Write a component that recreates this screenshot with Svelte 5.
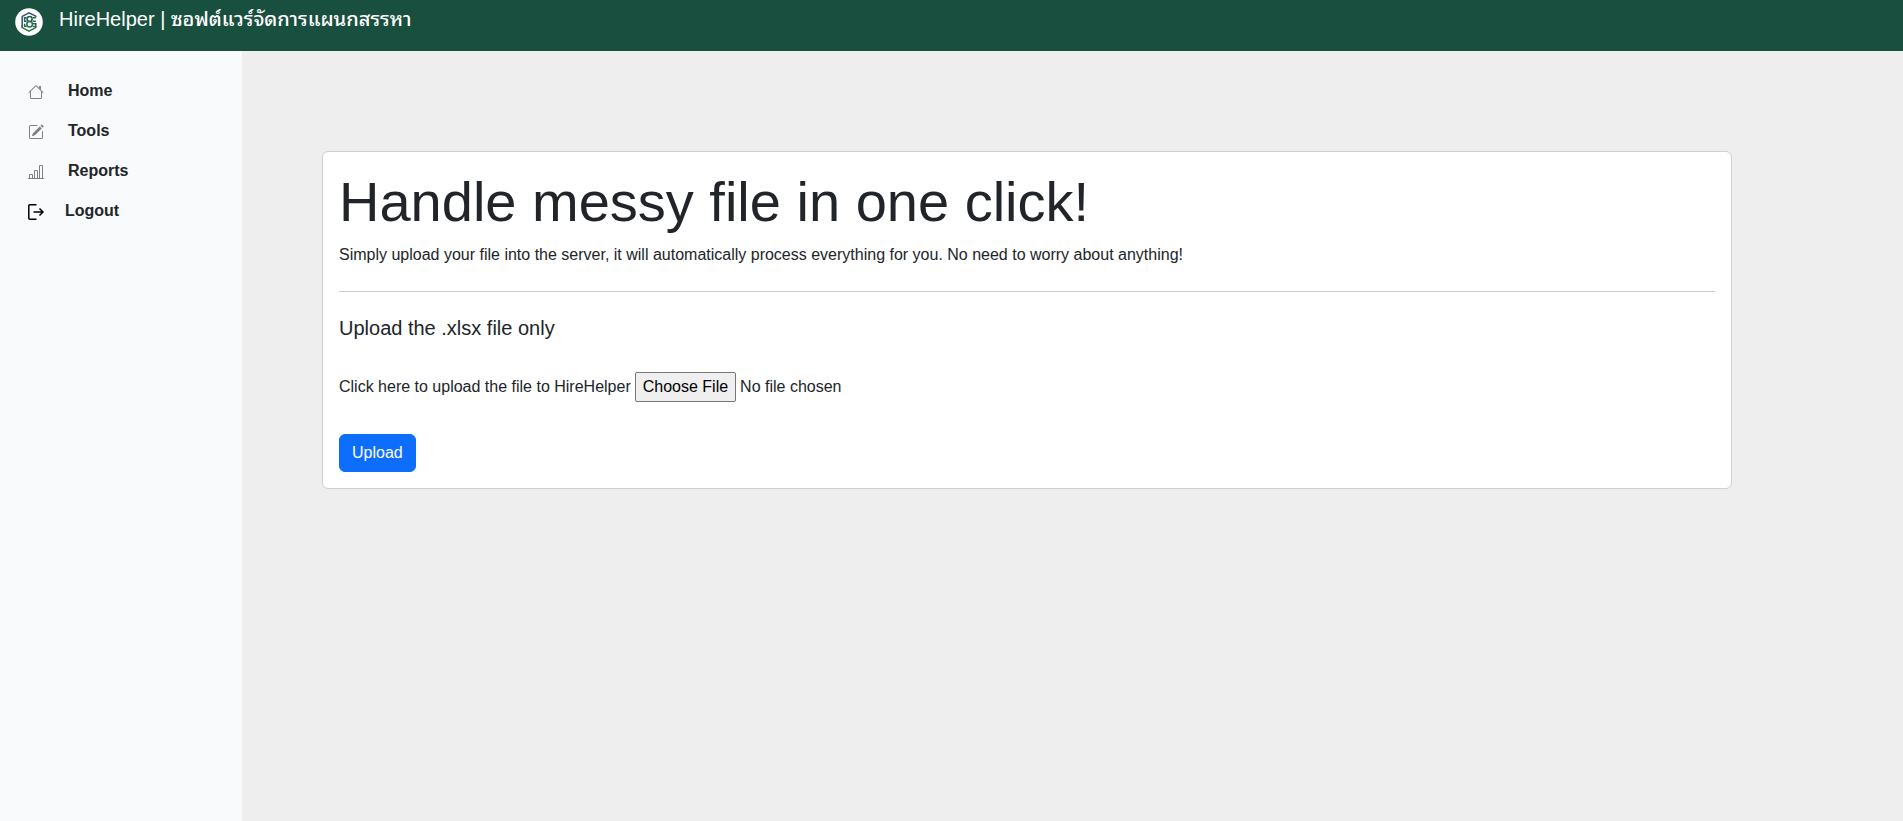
<script>
  const items = [
    {
      label: 'Home',
      paths: [
        'M2 13.5V7h1v6.5a.5.5 0 0 0 .5.5h9a.5.5 0 0 0 .5-.5V7h1v6.5a1.5 1.5 0 0 1-1.5 1.5h-9A1.5 1.5 0 0 1 2 13.5zm11-11V6l-2-2V2.5a.5.5 0 0 1 .5-.5h1a.5.5 0 0 1 .5.5z',
        'M7.293 1.5a1 1 0 0 1 1.414 0l6.647 6.646a.5.5 0 0 1-.708.708L8 2.207 1.354 8.854a.5.5 0 1 1-.708-.708L7.293 1.5z'
      ]
    },
    {
      label: 'Tools',
      paths: [
        'M15.502 1.94a.5.5 0 0 1 0 .706L14.459 3.69l-2-2L13.502.646a.5.5 0 0 1 .707 0l1.293 1.293zm-1.75 2.456-2-2L4.939 9.21a.5.5 0 0 0-.121.196l-.805 2.414a.25.25 0 0 0 .316.316l2.414-.805a.5.5 0 0 0 .196-.12l6.813-6.814z',
        'M1 13.5A1.5 1.5 0 0 0 2.5 15h11a1.5 1.5 0 0 0 1.5-1.5v-6a.5.5 0 0 0-1 0v6a.5.5 0 0 1-.5.5h-11a.5.5 0 0 1-.5-.5v-11a.5.5 0 0 1 .5-.5H9a.5.5 0 0 0 0-1H2.5A1.5 1.5 0 0 0 1 2.5v11z'
      ]
    },
    {
      label: 'Reports',
      paths: [
        'M11 2a1 1 0 0 1 1-1h2a1 1 0 0 1 1 1v12h.5a.5.5 0 0 1 0 1H.5a.5.5 0 0 1 0-1H1v-3a1 1 0 0 1 1-1h2a1 1 0 0 1 1 1v3h1V7a1 1 0 0 1 1-1h2a1 1 0 0 1 1 1v7h1V2zm1 12h2V2h-2v12zm-3 0V7H7v7h2zm-5 0v-3H2v3h2z'
      ]
    }
  ];
</script>

<div class="page">
  <header>
    <svg class="logo" viewBox="0 0 28 28" aria-hidden="true">
      <circle cx="14" cy="14" r="13.8" fill="#fff" />
      <g fill="none" stroke-width="1.5">
        <path d="M20.8 9.5V8.2L14 4.8 7.2 8.4v11.2" stroke="#35507c" />
        <path d="M7.2 17v2.6l6.8 3.6 6.8-3.6v-1" stroke="#2f7350" />
        <path d="M11.6 9.7H9.6v3.5h2M9.6 15.8v2.4h2" stroke="#25684c" />
        <path d="M17.6 9.7h3.2M17.6 13.2h3.2M18 15.8h2.8v2.6H18" stroke="#25684c" />
        <ellipse cx="14.6" cy="11" rx="2.5" ry="2.4" stroke="#2b5751" />
        <ellipse cx="14.6" cy="16.3" rx="2.8" ry="2.8" stroke="#267148" />
      </g>
    </svg>
    <span class="brand">HireHelper | <span class="thai" lang="th">ซอฟต์แวร์จัดการแผนกสรรหา</span></span>
  </header>

  <div class="body">
    <nav>
      {#each items as item}
        <a href="#{item.label.toLowerCase()}">
          <svg class="icon" viewBox="0 0 16 16" aria-hidden="true">
            {#each item.paths as d}<path {d} fill-rule="evenodd" />{/each}
          </svg>
          <span>{item.label}</span>
        </a>
      {/each}
      <a class="logout" href="#logout">
        <svg class="icon" viewBox="0 0 16 16" aria-hidden="true">
          <path d="M8.5.8H1.8a1 1 0 0 0-1 1v12.4a1 1 0 0 0 1 1h6.7M5.5 8h9.2M11.5 4.5 15 8l-3.5 3.5" />
        </svg>
        <span>Logout</span>
      </a>
    </nav>

    <main>
      <section class="card">
        <h1>Handle messy file in one click!</h1>
        <p>Simply upload your file into the server, it will automatically process everything for you. No need to worry about anything!</p>
        <hr />
        <form onsubmit={(e) => e.preventDefault()}>
          <h2>Upload the .xlsx file only</h2>
          <div class="field">
            <label for="file">Click here to upload the file to HireHelper</label>
            <input id="file" type="file" accept=".xlsx" />
          </div>
          <button type="submit">Upload</button>
        </form>
      </section>
    </main>
  </div>
</div>

<style>
  :global(body) {
    margin: 0;
    background: #eee;
  }
  .page {
    display: flex;
    flex-direction: column;
    min-height: 100vh;
    font: 16px/24px "Liberation Sans", Arial, sans-serif;
    color: #212529;
  }
  header {
    display: flex;
    align-items: flex-start;
    gap: 16px;
    box-sizing: border-box;
    min-height: 51px;
    padding: 4px 15px;
    background: #194f3e;
    color: #fff;
  }
  .logo {
    width: 28px;
    height: 28px;
    margin-top: 4px;
  }
  .brand {
    font-size: 20px;
    line-height: 30px;
  }
  .thai {
    font-family: "Liberation Sans", "Noto Sans Thai Looped", Loma, Waree, Garuda, Tahoma, sans-serif;
    font-weight: 500;
  }
  .body {
    display: flex;
    flex: 1;
  }
  nav {
    box-sizing: border-box;
    flex: 0 0 242px;
    padding: 20px 28px;
    background: #f8fafc;
  }
  nav a {
    display: flex;
    align-items: center;
    gap: 24px;
    height: 40px;
    color: #212529;
    font-weight: 700;
    text-decoration: none;
  }
  .icon {
    width: 16px;
    height: 16px;
    margin-top: 2px;
    fill: #808080;
  }
  nav .logout {
    gap: 21px;
  }
  .logout .icon {
    fill: none;
    stroke: #000;
    stroke-width: 1.5;
  }
  main {
    flex: 1;
    min-width: 0;
    padding: 100px 171px 100px 80px;
  }
  .card {
    padding: 16px;
    background: #fff;
    border: 1px solid #d0d0d0;
    border-radius: 6px;
  }
  h1 {
    margin: 0 0 8px;
    font-size: 56px;
    font-weight: 400;
    line-height: 67px;
  }
  p {
    margin: 0;
  }
  hr {
    margin: 24px 0;
    border: 0;
    border-top: 1px solid #c8c9ca;
  }
  form {
    display: flex;
    flex-direction: column;
    align-items: flex-start;
    gap: 32px;
  }
  h2 {
    margin: 0;
    font-size: 20px;
    font-weight: 400;
    line-height: 24px;
  }
  .field {
    display: flex;
    align-items: center;
    gap: 4px;
  }
  input {
    font: inherit;
    color: inherit;
  }
  input::file-selector-button {
    box-sizing: border-box;
    height: 30px;
    padding: 0 7px;
    border: 1px solid #767676;
    border-radius: 2px;
    background: #efefef;
    color: #000;
    font: inherit;
  }
  button {
    padding: 6px 12px;
    border: 1px solid #0d6efd;
    border-radius: 6px;
    background: #0d6efd;
    color: #fff;
    font: inherit;
    cursor: pointer;
  }
</style>
